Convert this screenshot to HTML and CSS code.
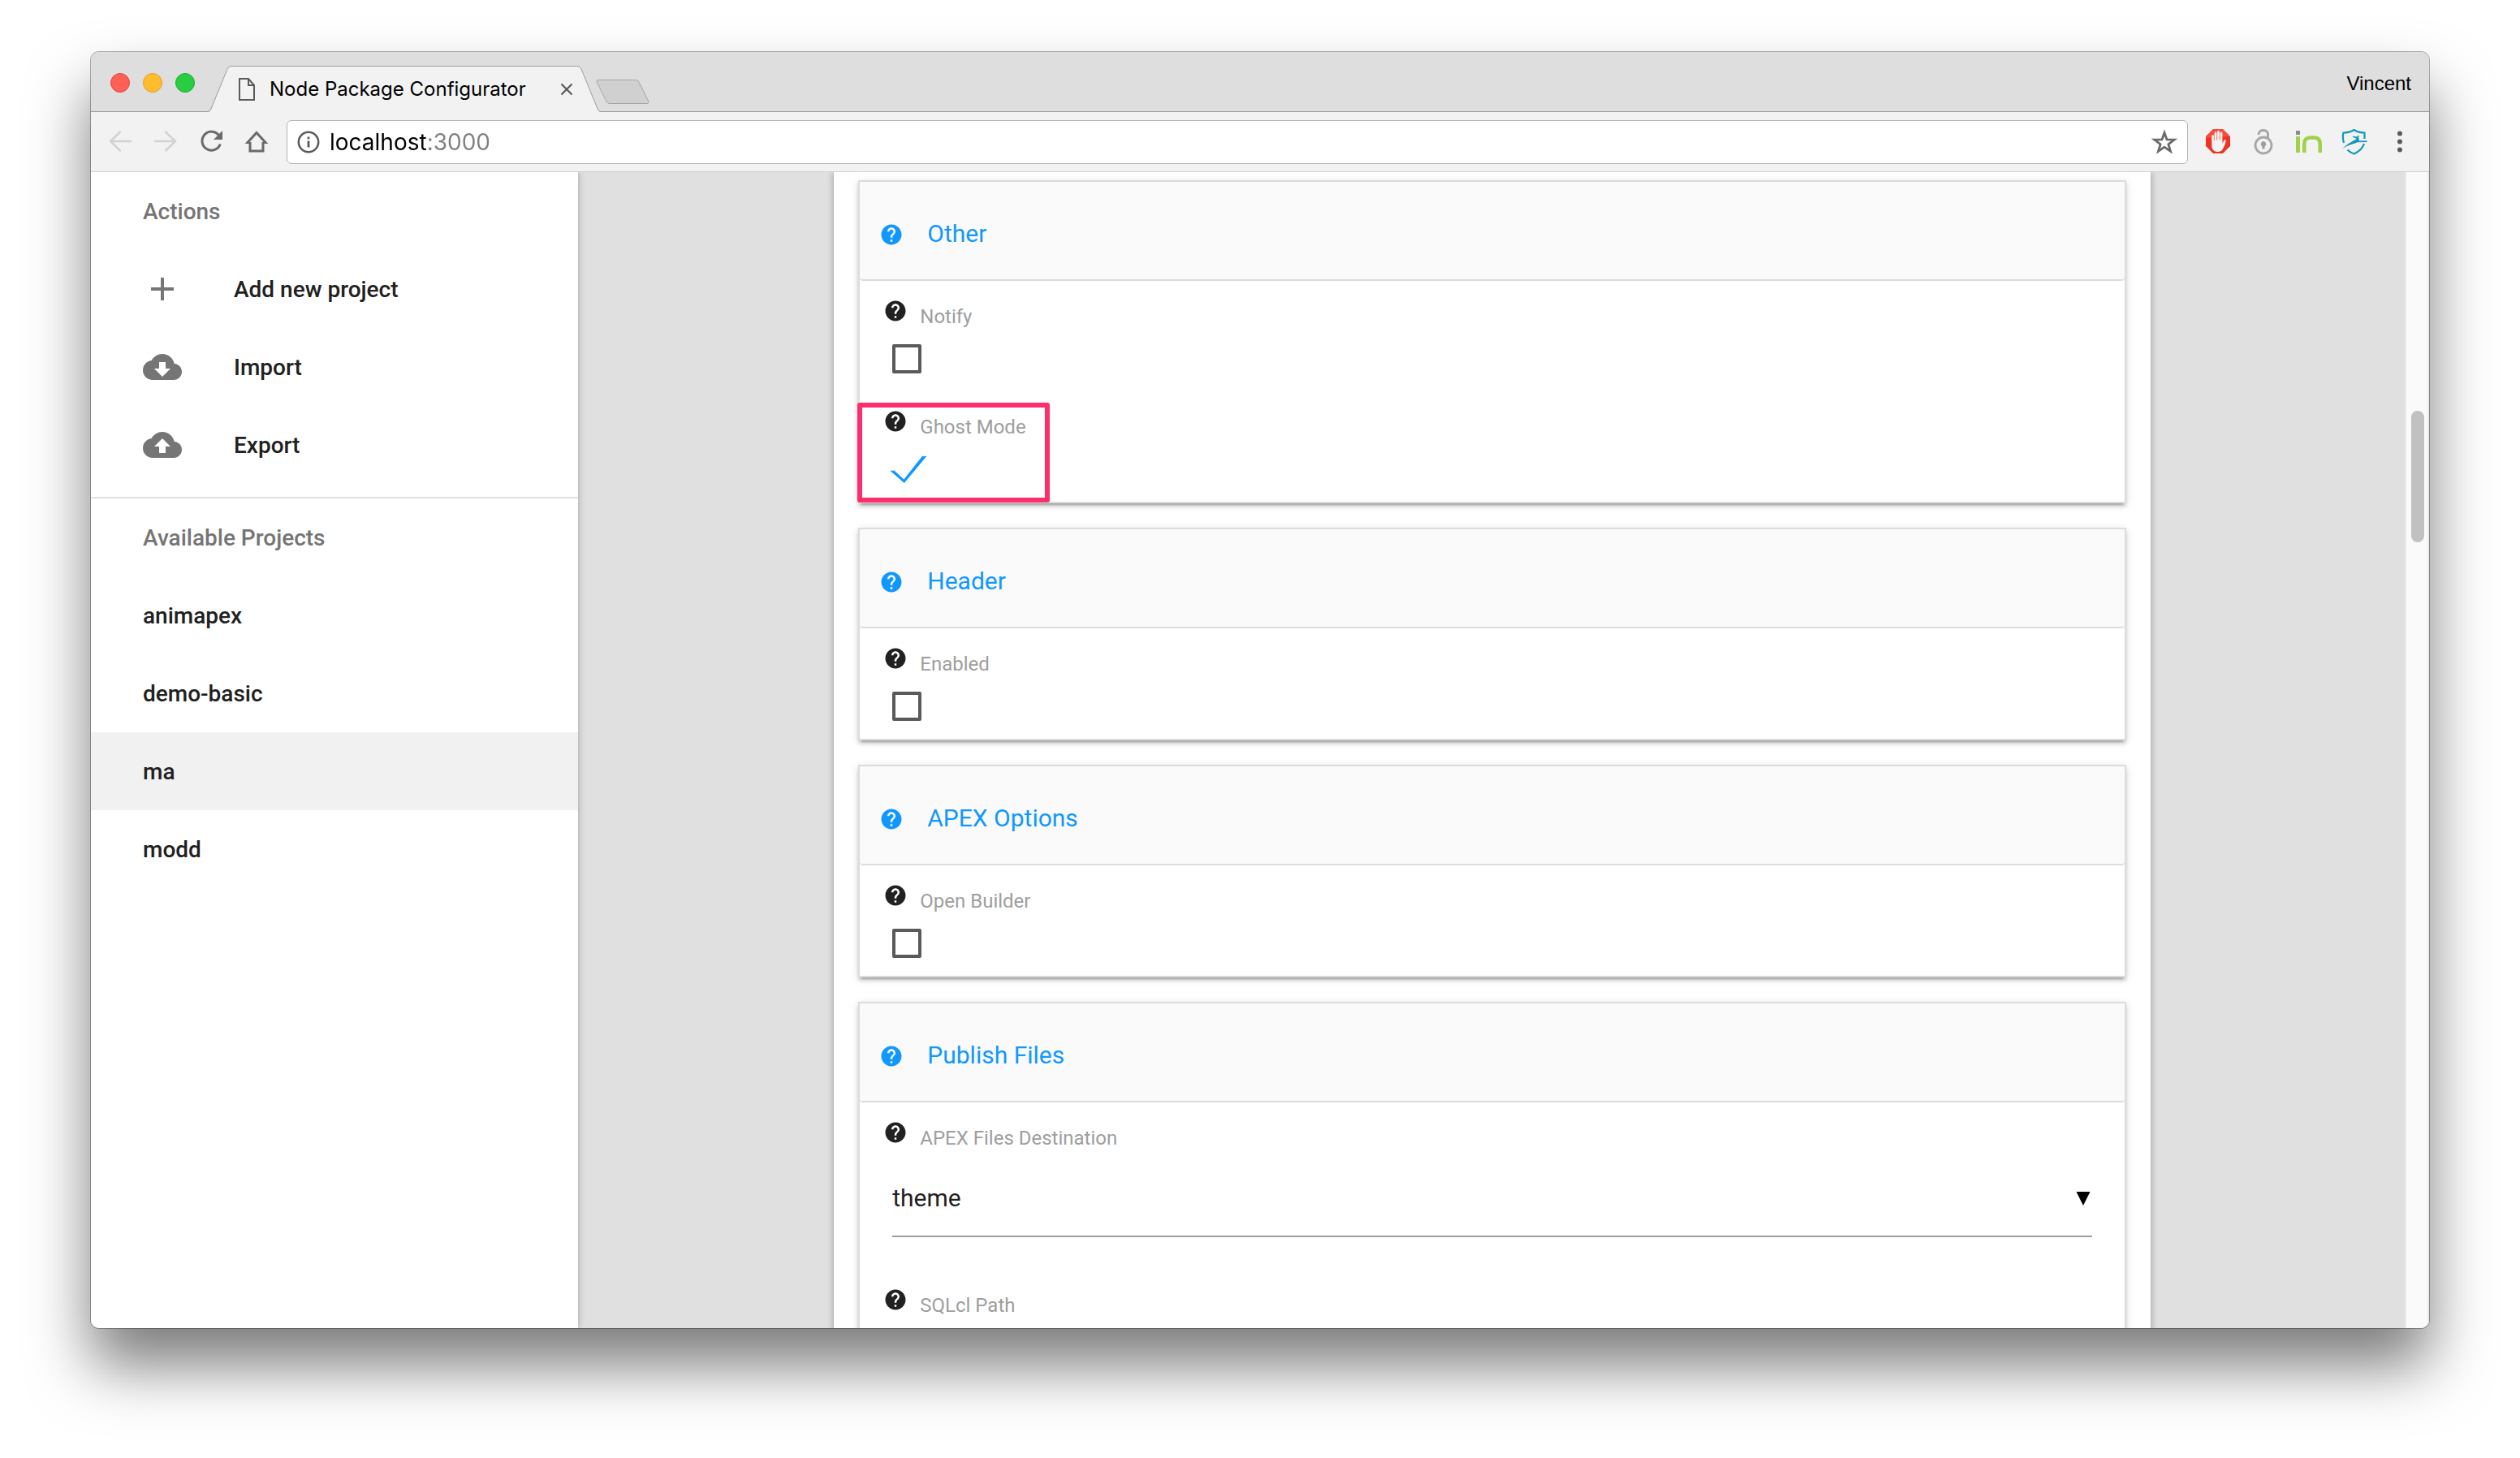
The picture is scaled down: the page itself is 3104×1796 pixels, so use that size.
FILE: index.html
```html
<!DOCTYPE html>
<html lang="en">
<head>
<meta charset="utf-8">
<title>Node Package Configurator</title>
<link rel="stylesheet" href="styles.css">
</head>
<body>
<svg class="sprite" aria-hidden="true">
  <symbol id="help" viewBox="0 0 24 24"><path fill="currentColor" d="M12 2C6.48 2 2 6.48 2 12s4.48 10 10 10 10-4.48 10-10S17.52 2 12 2zm1 17h-2v-2h2v2zm2.07-7.75l-.9.92C13.45 12.9 13 13.5 13 15h-2v-.5c0-1.1.45-2.1 1.17-2.83l1.24-1.26c.37-.36.59-.86.59-1.41 0-1.1-.9-2-2-2s-2 .9-2 2H8c0-2.210 1.790-4 4-4s4 1.790 4 4c0 .88-.36 1.680-.93 2.250z"/></symbol>
</svg>

<div class="window">
  <header class="tabstrip">
    <div class="lights">
      <button class="light light-close" aria-label="Close window"></button>
      <button class="light light-min" aria-label="Minimize window"></button>
      <button class="light light-zoom" aria-label="Zoom window"></button>
    </div>
    <div class="tab">
      <svg class="tab-shape" viewBox="0 0 484 57" aria-hidden="true"><path fill="#f2f2f2" d="M0 57 Q3 56.500 4 53L24 4Q26 .5 29 .5H455Q458 .5 460 4L480 53Q481 56.500 484 57z"/><path fill="none" stroke="#9c9c9c" d="M0 56.500Q3 56 4 53L24 4Q26 .5 29 .5H455Q458 .5 460 4L480 53Q481 56 484 56.500"/></svg>
      <svg class="tab-icon" viewBox="0 0 20 28" aria-hidden="true"><path fill="none" stroke="#5a5a5a" stroke-width="2" d="M1 1H12L19 9V27H1zM12 1V9H19"/></svg>
      <span class="tab-title">Node Package Configurator</span>
      <button class="tab-close" aria-label="Close tab"><svg viewBox="0 0 16 16"><path stroke="#5a5a5a" stroke-width="2.200" d="M1.500 1.500l13 13M14.500 1.500l-13 13"/></svg></button>
    </div>
    <button class="newtab" aria-label="New tab"><svg viewBox="0 0 66 31"><path fill="#d0d0d0" stroke="#a6a6a6" d="M3 .5H49Q52 .5 53 3L65 27Q65.500 29.500 63 29.500H17Q14 29.500 13 27L1 3Q.5 .5 3 .5z"/></svg></button>
    <span class="profile">Vincent</span>
  </header>

  <nav class="toolbar" aria-label="Browser">
    <div class="tools">
      <button class="tool" aria-label="Back"><svg viewBox="0 0 32 32"><path fill="none" stroke="#d2d2d2" stroke-width="2.500" stroke-linecap="round" d="M29 15H4M16 3.500L4 15l12 11.500"/></svg></button>
      <button class="tool" aria-label="Forward"><svg viewBox="0 0 32 32"><path fill="none" stroke="#d2d2d2" stroke-width="2.500" stroke-linecap="round" d="M3 15H28M16 3.500L28 15 16 26.500"/></svg></button>
      <button class="tool" aria-label="Reload"><svg viewBox="0 0 32 32"><path fill="none" stroke="#6a6a6a" stroke-width="3" d="M25.500 7.500A11.500 11.500 0 1 0 27.300 18.500"/><path fill="#6a6a6a" d="M30 2V13H19z"/></svg></button>
      <button class="tool" aria-label="Home"><svg viewBox="0 0 32 32"><path fill="none" stroke="#6a6a6a" stroke-width="3" stroke-linejoin="miter" d="M8 16V27H24V16M8 16.500H5L16 4.500 27 16.500H24"/></svg></button>
    </div>
    <div class="omnibox">
      <svg class="icon-info" viewBox="0 0 28 28" aria-hidden="true"><circle cx="14" cy="14" r="12.200" fill="none" stroke="#5a5a5a" stroke-width="2.500"/><path stroke="#5a5a5a" stroke-width="2.800" d="M14 12.500V20.500M14 7.500V10.300"/></svg>
      <input class="url" type="text" value="localhost:3000" aria-label="Address">
      <button class="tool" aria-label="Bookmark"><svg viewBox="0 0 32 32"><path fill="none" stroke="#6a6a6a" stroke-width="2.800" d="M16 4.500l3 8.400 9.200.2-7.300 5.600 2.600 8.600L16 22.200 8.500 27.300l2.600-8.600L3.800 13.100l9.200-.2z"/></svg></button>
    </div>
    <div class="tools">
      <button class="tool" aria-label="Ad blocker"><svg viewBox="0 0 32 32"><path fill="#ee3322" d="M10 0H22L31 9V21L22 30H10L1 21V9z"/><path fill="#ff6a5c" d="M10 0H22L31 9 1 11V9z" opacity=".45"/><path fill="#f4f4f4" d="M8.300 8.500a1.300 1.300 0 0 1 2.600 0V14h.7V5a1.400 1.400 0 0 1 2.800 0v8.500h.7V3.500a1.400 1.400 0 0 1 2.800 0v10h.7V5a1.400 1.400 0 0 1 2.800 0v12.500l2-3.500c.8-1.300 2.600-.9 2.300.6-.7 3.400-2.200 7.500-4 10.400-1.500 2.300-3.200 3-5.800 3-4.500 0-7.600-2.600-7.600-8z"/></svg></button>
      <button class="tool" aria-label="Privacy lock"><svg viewBox="0 0 32 32"><g fill="none" stroke="#a6a6a6"><circle cx="16" cy="20" r="10" stroke-width="2.800"/><path stroke-width="3" d="M10 7C10-.3 21.500-.3 21.500 6.500V11"/></g><path fill="#9c9c9c" d="M16 15a3.500 3.500 0 0 1 1.500 6.500V24.500h-3v-3A3.500 3.500 0 0 1 16 15z"/></svg></button>
      <button class="tool" aria-label="Invision"><svg viewBox="0 0 32 32"><path fill="#8a8a8a" d="M0 2h5v5H0z"/><path fill="#a2d149" d="M0 9h5v20H0z"/><path fill="none" stroke="#a2d149" stroke-width="4.600" d="M10.300 29V18Q10.300 10.500 18 10.500H22Q29.700 10.500 29.700 18V29"/></svg></button>
      <button class="tool" aria-label="Password shield"><svg viewBox="0 0 32 32"><g fill="none" stroke="#0e98b8" stroke-width="2.200"><path d="M3 17Q1 10 2.500 4.500 10 4.500 15.500 1 21 4.500 28.500 4.500V12"/><path d="M7.500 25.500Q11 29 15.500 30.500 25.500 26 28 18"/></g><path fill="#0e98b8" d="M1.500 24.500C6 19 10 17.500 14.500 14.500L19 12l-5.500-2.500 1.500-.8 4 .8 2-1.800 1 1.300-1 1 1 4.500 9.500-.3v1.800l-12 .2C14 19 7 19.500 1.500 24.500z"/></svg></button>
      <button class="tool" aria-label="Menu"><svg viewBox="0 0 32 32"><g fill="#5a5a5a"><circle cx="16" cy="5.500" r="3"/><circle cx="16" cy="15.500" r="3"/><circle cx="16" cy="25.500" r="3"/></g></svg></button>
    </div>
  </nav>

  <div class="viewport">
    <aside class="sidebar">
      <section class="side-group">
        <h2 class="side-title">Actions</h2>
        <button class="side-item"><svg class="side-icon" viewBox="0 0 24 24"><path fill="currentColor" d="M19 13h-6v6h-2v-6H5v-2h6V5h2v6h6v2z"/></svg>Add new project</button>
        <button class="side-item"><svg class="side-icon" viewBox="0 0 24 24"><path fill="currentColor" d="M19.350 10.040C18.670 6.590 15.640 4 12 4 9.110 4 6.600 5.640 5.350 8.040 2.340 8.360 0 10.910 0 14c0 3.310 2.690 6 6 6h13c2.760 0 5-2.240 5-5 0-2.640-2.050-4.780-4.650-4.960zM17 13l-5 5-5-5h3V9h4v4h3z"/></svg>Import</button>
        <button class="side-item"><svg class="side-icon" viewBox="0 0 24 24"><path fill="currentColor" d="M19.350 10.040C18.670 6.590 15.640 4 12 4 9.110 4 6.600 5.640 5.350 8.040 2.340 8.360 0 10.910 0 14c0 3.310 2.690 6 6 6h13c2.760 0 5-2.240 5-5 0-2.640-2.050-4.780-4.650-4.960zM14 13v4h-4v-4H7l5-5 5 5h-3z"/></svg>Export</button>
      </section>
      <section class="side-group">
        <h2 class="side-title">Available Projects</h2>
        <button class="side-item">animapex</button>
        <button class="side-item">demo-basic</button>
        <button class="side-item side-item-active">ma</button>
        <button class="side-item">modd</button>
      </section>
    </aside>

    <main class="content">
      <form class="sheet">
        <section class="card">
          <h3 class="card-head"><svg class="help"><use href="#help"/></svg><span class="card-title">Other</span></h3>
          <div class="field">
            <div class="field-label"><svg class="help"><use href="#help"/></svg><label for="notify">Notify</label></div>
            <input class="check" type="checkbox" id="notify">
          </div>
          <div class="field">
            <div class="field-label"><svg class="help"><use href="#help"/></svg><label for="ghost">Ghost Mode</label></div>
            <input class="check" type="checkbox" id="ghost" checked>
            <span class="highlight"></span>
          </div>
        </section>
        <section class="card">
          <h3 class="card-head"><svg class="help"><use href="#help"/></svg><span class="card-title">Header</span></h3>
          <div class="field">
            <div class="field-label"><svg class="help"><use href="#help"/></svg><label for="enabled">Enabled</label></div>
            <input class="check" type="checkbox" id="enabled">
          </div>
        </section>
        <section class="card">
          <h3 class="card-head"><svg class="help"><use href="#help"/></svg><span class="card-title">APEX Options</span></h3>
          <div class="field">
            <div class="field-label"><svg class="help"><use href="#help"/></svg><label for="builder">Open Builder</label></div>
            <input class="check" type="checkbox" id="builder">
          </div>
        </section>
        <section class="card">
          <h3 class="card-head"><svg class="help"><use href="#help"/></svg><span class="card-title">Publish Files</span></h3>
          <div class="field field-tall">
            <div class="field-label"><svg class="help"><use href="#help"/></svg><label for="dest">APEX Files Destination</label></div>
            <div class="select-wrap">
              <select class="control" id="dest"><option>theme</option></select>
              <svg class="caret" viewBox="0 0 18 17" aria-hidden="true"><path d="M.5 0h17L9 17z"/></svg>
            </div>
          </div>
          <div class="field field-tall">
            <div class="field-label"><svg class="help"><use href="#help"/></svg><label for="sqlcl">SQLcl Path</label></div>
            <div class="select-wrap"><input class="control" type="text" id="sqlcl"></div>
          </div>
        </section>
      </form>
    </main>
    <div class="scrollbar"><div class="thumb"></div></div>
  </div>
</div>
</body>
</html>
```

FILE: styles.css
```css
* {
  box-sizing: border-box;
}

body {
  margin: 0;
  height: 100vh;
  padding: 64px 112px 160px;
  overflow: hidden;
  background: #fff;
  font-family: Roboto, "Liberation Sans", sans-serif;
  color: #212121;
}

button {
  padding: 0;
  border: 0;
  background: none;
  font: inherit;
  color: inherit;
}

svg {
  display: block;
  flex: none;
}

.sprite {
  position: absolute;
  width: 0;
  height: 0;
}

/* Window frame */
.window {
  display: flex;
  flex-direction: column;
  height: 100%;
  border-radius: 10px;
  box-shadow: 0 0 0 1px rgba(0, 0, 0, 0.3), 0 46px 76px rgba(0, 0, 0, 0.52);
}

.tabstrip {
  display: flex;
  flex: none;
  align-items: center;
  height: 74px;
  padding: 0 22px 0 24px;
  border-bottom: 1px solid #9c9c9c;
  border-radius: 10px 10px 0 0;
  background: #dedede;
  font-family: Inter, "Liberation Sans", sans-serif;
  font-size: 24px;
  color: #000;
}

.lights {
  display: flex;
  gap: 16px;
  margin-right: 16px;
  padding-top: 2px;
}

.light {
  width: 24px;
  height: 24px;
  border: 1px solid #e0443e;
  border-radius: 50%;
  background: #ff5f57;
}

.light-min {
  border-color: #dfa023;
  background: #ffbd2e;
}

.light-zoom {
  border-color: #1aab29;
  background: #28cd41;
}

.tab {
  position: relative;
  display: flex;
  align-items: center;
  align-self: flex-end;
  width: 484px;
  height: 57px;
  margin-bottom: -1px;
  padding: 0 34px 0 38px;
}

.tab-shape {
  position: absolute;
  inset: 0;
  width: 100%;
  height: 100%;
}

.tab-icon {
  position: relative;
  width: 20px;
  height: 28px;
  margin-right: 18px;
}

.tab-title {
  position: relative;
  flex: 1;
  white-space: nowrap;
}

.tab-close {
  position: relative;
}

.tab-close svg {
  width: 16px;
  height: 16px;
}

.newtab {
  align-self: flex-end;
  margin: 0 0 8px -6px;
}

.newtab svg {
  width: 66px;
  height: 31px;
}

.profile {
  margin-left: auto;
  padding-top: 4px;
  font-family: "Liberation Sans", sans-serif;
}

.light,
.profile {
  flex: none;
}

/* Toolbar */
.toolbar {
  display: flex;
  flex: none;
  align-items: center;
  gap: 21px;
  height: 74px;
  padding: 0 20px;
  border-bottom: 1px solid #d0d0d0;
  background: #f2f2f2;
}

.tools {
  display: flex;
  gap: 24px;
}

.tool svg {
  width: 32px;
  height: 32px;
}

.omnibox {
  display: flex;
  flex: 1;
  align-items: center;
  gap: 12px;
  height: 54px;
  padding: 0 12px;
  border: 1px solid #b4b4b4;
  border-radius: 6px;
  background: #fff;
}

.icon-info {
  width: 28px;
  height: 28px;
}

/* Host name in black, the port after it in grey */
.url {
  flex: 1;
  height: 40px;
  padding: 0;
  border: 0;
  background: linear-gradient(90deg, #000 120px, #808080 120px);
  -webkit-background-clip: text;
  background-clip: text;
  -webkit-text-fill-color: transparent;
  font-family: Inter, "Liberation Sans", sans-serif;
  font-size: 28px;
  color: #000;
}

/* Page */
.viewport {
  display: flex;
  flex: 1;
  min-height: 0;
  overflow: hidden;
  border-radius: 0 0 10px 10px;
  background: #e0e0e0;
}

.sidebar {
  flex: none;
  width: 600px;
  background: #fff;
  box-shadow: 0 0 8px rgba(0, 0, 0, 0.3);
  font-size: 28px;
  font-weight: 500;
}

.side-group + .side-group {
  margin-top: 16px;
  border-top: 2px solid #e0e0e0;
}

.side-title {
  height: 96px;
  margin: 0;
  padding-left: 64px;
  font: inherit;
  line-height: 98px;
  color: #757575;
}

.side-item {
  display: flex;
  align-items: center;
  gap: 64px;
  width: 100%;
  height: 96px;
  padding-left: 64px;
}

.side-item-active {
  background: #f1f1f1;
}

.side-icon {
  width: 48px;
  height: 48px;
  color: #757575;
}

.content {
  flex: 1;
  min-width: 0;
}

.sheet {
  display: flex;
  flex-direction: column;
  gap: 30px;
  width: 72%;
  min-height: 100%;
  margin: 0 auto;
  padding: 10px 30px;
  background: #fff;
  box-shadow: 0 0 8px rgba(0, 0, 0, 0.35);
}

.card {
  border: 2px solid #dcdcdc;
  background: #fff;
  box-shadow: 0 4px 4px rgba(0, 0, 0, 0.14), 0 6px 2px -4px rgba(0, 0, 0, 0.2), 0 2px 10px rgba(0, 0, 0, 0.12);
}

.card-head {
  display: flex;
  align-items: center;
  gap: 29px;
  height: 122px;
  margin: 0;
  padding: 10px 24px 0;
  border-bottom: 2px solid #dcdcdc;
  border-radius: 0 0 4px 4px;
  background: #fafafa;
  font-size: 30px;
  font-weight: 400;
  color: #1098ff;
}

.card-title {
  padding-bottom: 4px;
}

.help {
  width: 30px;
  height: 30px;
}

.field {
  position: relative;
  padding: 22px 40px;
}

.field-tall {
  padding-bottom: 40px;
}

.field-label {
  display: flex;
  gap: 15px;
  height: 36px;
  margin-left: -11px;
}

.field-label label {
  align-self: flex-end;
  font-size: 24px;
  line-height: 28px;
  color: #9e9e9e;
}

.check {
  position: relative;
  display: block;
  width: 36px;
  height: 36px;
  margin: 20px 0 0;
  border: 4px solid #5a5a5a;
  border-radius: 2px;
  appearance: none;
}

.check:checked {
  border-color: transparent;
}

.check:checked::before {
  content: "";
  position: absolute;
  left: -7px;
  top: -2px;
  width: 45px;
  height: 33px;
  background: #1098ff;
  clip-path: polygon(0 54%, 12% 54%, 38% 86%, 88% 0, 100% 0, 39% 100%);
}

.highlight {
  position: absolute;
  left: -3px;
  top: 14px;
  width: 237px;
  height: 123px;
  border: 6px solid #ff2d6c;
  border-radius: 3px;
}

.select-wrap {
  position: relative;
  margin-top: 14px;
}

.control {
  display: block;
  width: 100%;
  height: 94px;
  padding: 0 0 2px;
  border: 0;
  border-bottom: 2px solid #9e9e9e;
  border-radius: 0;
  background: none;
  appearance: none;
  font: inherit;
  font-size: 30px;
  color: inherit;
}

.caret {
  position: absolute;
  right: 2px;
  top: 38px;
  width: 18px;
  height: 17px;
}

.scrollbar {
  flex: none;
  width: 28px;
  border-right: 2px solid #ebebeb;
  background: #fafafa;
  box-shadow: -2px 0 0 #e8e8e8;
}

.thumb {
  width: 16px;
  height: 162px;
  margin: 294px 0 0 6px;
  border-radius: 8px;
  background: #c1c1c1;
}
```
